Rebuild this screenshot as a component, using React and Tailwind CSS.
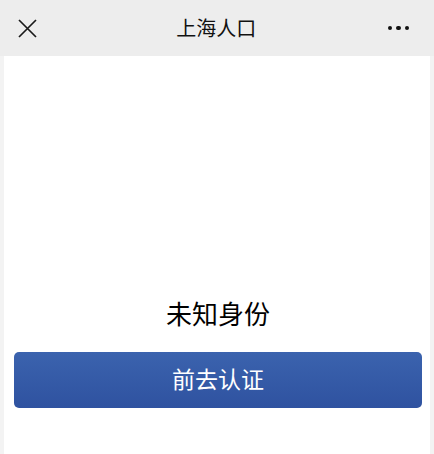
export default function App() {
  return (
    <div
      className="w-full h-[454px] flex flex-col bg-[#f3f3f3]"
      style={{ fontFamily: '"Noto Sans CJK SC", "Noto Sans", sans-serif' }}
    >
      {/* 顶部导航 */}
      <div className="h-14 bg-[#ededed] flex items-center justify-between pl-[18px] pr-[25px] shrink-0">
        <svg width="19" height="19" viewBox="0 0 19 19" className="text-[#1a1a1a]">
          <path d="M1 1 L18 18 M18 1 L1 18" stroke="currentColor" strokeWidth="1.7" fill="none" />
        </svg>
        <div className="text-[20px] text-[#111] leading-none ml-[8px]">上海人口</div>
        <div className="flex items-center gap-[4px]">
          <span className="w-[4.5px] h-[4.5px] rounded-full bg-[#111]" />
          <span className="w-[4.5px] h-[4.5px] rounded-full bg-[#111]" />
          <span className="w-[4.5px] h-[4.5px] rounded-full bg-[#111]" />
        </div>
      </div>

      <div className="flex-1 ml-1 mr-[4px] bg-white flex flex-col justify-end pl-[10px] pr-[8px] pb-[46px]">
        <div className="text-center text-[26px] leading-[34px] text-black">未知身份</div>
        <button className="mt-[22px] h-14 w-full rounded-[5px] bg-gradient-to-b from-[#3b63ae] to-[#2f52a0] text-white text-[23px] pb-[3px]">
          前去认证
        </button>
      </div>
    </div>
  );
}
